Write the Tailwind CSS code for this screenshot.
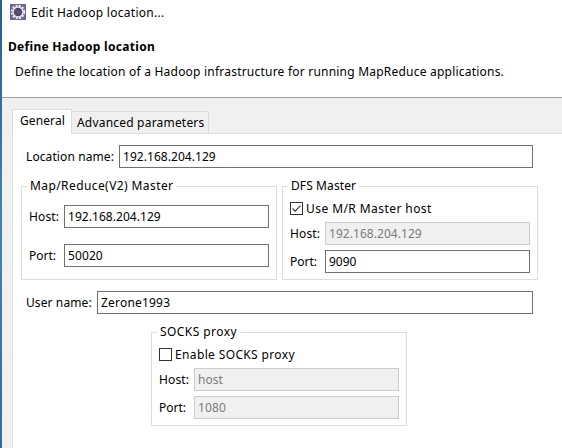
<!DOCTYPE html>
<html lang="en">
<head>
<meta charset="utf-8">
<title>Edit Hadoop location...</title>
<script src="https://cdn.jsdelivr.net/npm/@tailwindcss/browser@4"></script>
</head>
<body class="w-[562px] h-[448px] overflow-hidden flex bg-white text-black text-[12px] leading-4 font-['Noto_Sans','Open_Sans',sans-serif] whitespace-nowrap">
<div class="w-[2px] shrink-0 bg-linear-to-b from-[#245f91] via-[#3b87b8] to-[#2f6c9c]"></div>
<main class="flex-1 min-w-0 flex flex-col">
  <header class="h-[98px] shrink-0 border-b border-[#a0a0a0] bg-white">
    <div class="h-[39px] flex pl-2 pt-[5px]">
      <svg class="w-4 h-4 shrink-0 -mt-px" viewBox="0 0 16 16">
        <rect width="16" height="16" fill="#71658d"/>
        <circle cx="8" cy="8" r="6.3" fill="none" stroke="#f3f0f5" stroke-width="1.8" stroke-dasharray="2 1.3"/>
        <circle cx="8" cy="8" r="5" fill="#4c4568" stroke="#e9e6ee" stroke-width="1.4"/>
        <path d="M4.2 7h7.6M4.2 9h7.6" stroke="#716787" stroke-width=".7"/>
      </svg>
      <span class="ml-[5px] tracking-[0.27px]">Edit Hadoop location...</span>
    </div>
    <h1 class="pl-[6px] font-bold tracking-[0.3px]">Define Hadoop location</h1>
    <p class="pl-[13px] pt-[9px] tracking-[0.215px]">Define the location of a Hadoop infrastructure for running MapReduce applications.</p>
  </header>
  <div class="flex-1 bg-[#f0f0f0] pl-[10px] pt-[11px] flex flex-col">
    <nav class="flex items-end h-[25px] shrink-0">
      <div class="w-[60px] h-[25px] bg-white border border-b-0 border-[#dcdcdc] pl-[7px] pt-[3px] tracking-[0.1px]">General</div>
      <div class="w-[137px] h-[23px] border border-l-0 border-[#dcdcdc] pl-[5px] pt-[3px] tracking-[0.2px]">Advanced parameters</div>
      <div class="flex-1 h-px bg-[#dcdcdc]"></div>
    </nav>
    <section class="flex-1 bg-white border-l border-[#e3dfd9] pl-2 pt-[11px] flex flex-col items-start">
      <div class="flex items-center h-[23px] pl-[5px]">
        <label class="w-[93px] tracking-[0.1px]">Location name:</label>
        <div class="w-[414px] h-[23px] border border-[#707070] pl-[3px] pt-[3px] tracking-[0.05px]">192.168.204.129</div>
      </div>
      <div class="flex gap-[5px] mt-[18px]">
        <div class="relative w-[256px] h-[94px] border border-[#dcdcdc] pl-[7px] pt-[18px]">
          <span class="absolute left-[5px] -top-[9px] bg-white px-[3px] tracking-[0.41px]">Map/Reduce(V2) Master</span>
          <div class="flex items-center"><label class="w-[35px] tracking-[0.15px]">Host:</label><div class="w-[205px] h-[23px] border border-[#707070] pl-[3px] pt-[3px] tracking-[0.05px]">192.168.204.129</div></div>
          <div class="flex items-center mt-4"><label class="w-[35px]">Port:</label><div class="w-[205px] h-[23px] border border-[#707070] pl-[3px] pt-[3px] tracking-[0.1px]">50020</div></div>
        </div>
        <div class="relative w-[256px] h-[94px] border border-[#dcdcdc] pl-[7px] pt-[15px]">
          <span class="absolute left-[5px] -top-[9px] bg-white px-[3px] tracking-[0.1px]">DFS Master</span>
          <div class="flex items-center h-[13px]">
            <svg class="w-[13px] h-[13px]" viewBox="0 0 13 13"><rect x=".5" y=".5" width="12" height="12" fill="#fff" stroke="#333"/><path d="M2.5 6.5l2.7 2.7 5.3-5.5" fill="none" stroke="#333" stroke-width="1.1"/></svg>
            <span class="ml-[3px] tracking-[0.43px]">Use M/R Master host</span>
          </div>
          <div class="flex items-center mt-[7px]"><label class="w-[35px] tracking-[0.15px]">Host:</label><div class="w-[205px] h-[23px] border border-[#cccccc] bg-[#f0f0f0] text-[#7b7b7b] pl-[3px] pt-[3px] tracking-[0.05px]">192.168.204.129</div></div>
          <div class="flex items-center mt-[5px]"><label class="w-[35px]">Port:</label><div class="w-[205px] h-[23px] border border-[#707070] pl-[3px] pt-[3px]">9090</div></div>
        </div>
      </div>
      <div class="flex items-center h-[23px] mt-[11px] pl-[5px]">
        <label class="w-[71px] tracking-[0.1px]">User name:</label>
        <div class="w-[436px] h-[23px] border border-[#707070] pl-[3px] pt-[3px] tracking-[0.2px]">Zerone1993</div>
      </div>
      <div class="relative w-[256px] h-[94px] ml-[130px] mt-[18px] border border-[#dcdcdc] pl-[7px] pt-[15px]">
        <span class="absolute left-[5px] -top-[9px] bg-white px-[3px] tracking-[0.43px]">SOCKS proxy</span>
        <div class="flex items-center h-[13px]">
          <svg class="w-[13px] h-[13px]" viewBox="0 0 13 13"><rect x=".5" y=".5" width="12" height="12" fill="#fff" stroke="#333"/></svg>
          <span class="ml-[3px] tracking-[0.36px]">Enable SOCKS proxy</span>
        </div>
        <div class="flex items-center mt-[7px]"><label class="w-[35px] tracking-[0.15px]">Host:</label><div class="w-[205px] h-[23px] border border-[#cccccc] bg-[#f0f0f0] text-[#7b7b7b] pl-[3px] pt-[3px]">host</div></div>
        <div class="flex items-center mt-[5px]"><label class="w-[35px]">Port:</label><div class="w-[205px] h-[23px] border border-[#cccccc] bg-[#f0f0f0] text-[#7b7b7b] pl-[3px] pt-[3px] tracking-[0.1px]">1080</div></div>
      </div>
    </section>
  </div>
</main>
</body>
</html>
